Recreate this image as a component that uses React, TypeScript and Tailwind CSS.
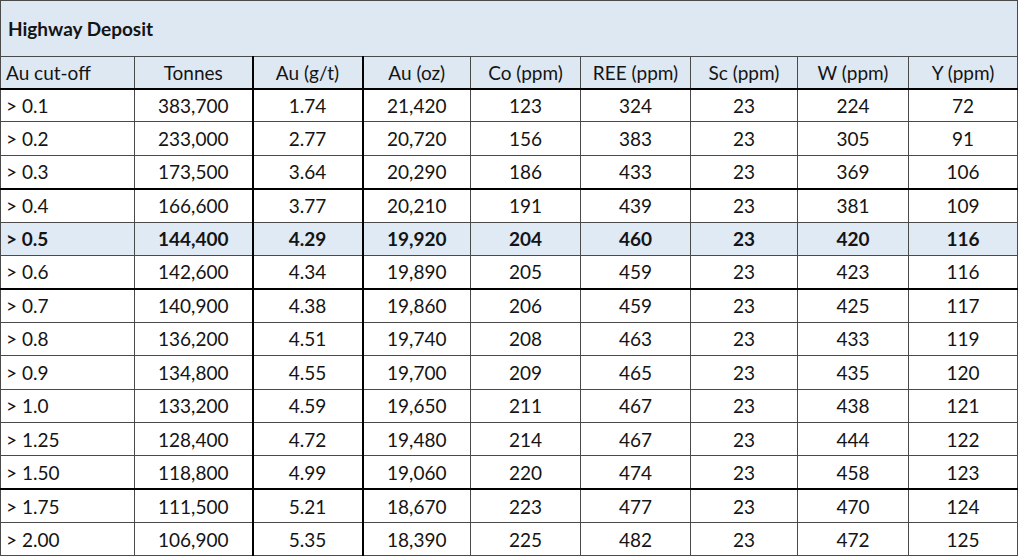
const headers = ["Au cut-off", "Tonnes", "Au (g/t)", "Au (oz)", "Co (ppm)", "REE (ppm)", "Sc (ppm)", "W (ppm)", "Y (ppm)"];

const widths = ["w-[134px]", "w-[118px]", "w-[110px]", "w-[108px]", "w-[110px]", "w-[110px]", "w-[107px]", "w-[111px]", "w-[109px]"];

const rows = [
  { cells: ["> 0.1", "383,700", "1.74", "21,420", "123", "324", "23", "224", "72"] },
  { cells: ["> 0.2", "233,000", "2.77", "20,720", "156", "383", "23", "305", "91"] },
  { cells: ["> 0.3", "173,500", "3.64", "20,290", "186", "433", "23", "369", "106"], thick: true },
  { cells: ["> 0.4", "166,600", "3.77", "20,210", "191", "439", "23", "381", "109"] },
  { cells: ["> 0.5", "144,400", "4.29", "19,920", "204", "460", "23", "420", "116"], hl: true },
  { cells: ["> 0.6", "142,600", "4.34", "19,890", "205", "459", "23", "423", "116"], thick: true },
  { cells: ["> 0.7", "140,900", "4.38", "19,860", "206", "459", "23", "425", "117"] },
  { cells: ["> 0.8", "136,200", "4.51", "19,740", "208", "463", "23", "433", "119"] },
  { cells: ["> 0.9", "134,800", "4.55", "19,700", "209", "465", "23", "435", "120"] },
  { cells: ["> 1.0", "133,200", "4.59", "19,650", "211", "467", "23", "438", "121"] },
  { cells: ["> 1.25", "128,400", "4.72", "19,480", "214", "467", "23", "444", "122"] },
  { cells: ["> 1.50", "118,800", "4.99", "19,060", "220", "474", "23", "458", "123"], thick: true },
  { cells: ["> 1.75", "111,500", "5.21", "18,670", "223", "477", "23", "470", "124"] },
  { cells: ["> 2.00", "106,900", "5.35", "18,390", "225", "482", "23", "472", "125"] },
];

function cellClass(i: number) {
  let c = "border border-[#4a4a4a] p-0 leading-none";
  if (i === 0) c += " text-left pl-[5px]";
  else c += " text-center";
  if (i === 2 || i === 3) c += " border-l-2 border-l-black";
  return c;
}

export default function App() {
  return (
    <div className="w-[1020px] h-[557px] bg-white overflow-hidden">
      <table className="table-fixed border-collapse w-[1017px] text-[19px] text-[#141414] font-['Lato','Liberation_Sans',sans-serif]">
        <colgroup>
          {widths.map((w, i) => (
            <col key={i} className={w} />
          ))}
        </colgroup>
        <tbody>
          {/* Title */}
          <tr className="h-[56px] bg-[#dde8f3]">
            <td colSpan={9} className="border border-[#4a4a4a] pl-[7px] text-left font-bold text-[19px] leading-none">
              Highway Deposit
            </td>
          </tr>

          {/* Header */}
          <tr className="h-[32px] bg-[#dde8f3]">
            {headers.map((h, i) => (
              <td key={h} className={cellClass(i) + " border-b-2 border-b-black"}>
                {h}
              </td>
            ))}
          </tr>

          {/* Data */}
          {rows.map((r, ri) => (
            <tr key={ri} className={"h-[33.4px] " + (r.hl ? "bg-[#dfeaf4] font-bold" : "bg-white")}>
              {r.cells.map((c, i) => (
                <td key={i} className={cellClass(i) + (r.thick ? " border-b-2 border-b-black" : "")}>
                  {c}
                </td>
              ))}
            </tr>
          ))}
        </tbody>
      </table>
    </div>
  );
}
